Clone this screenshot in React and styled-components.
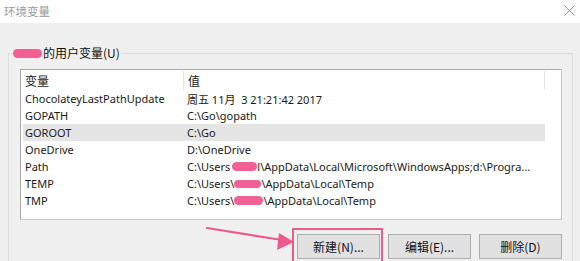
import React from "react";
import styled, { createGlobalStyle } from "styled-components";

const Global = createGlobalStyle`
  html, body { margin: 0; padding: 0; }
  body {
    width: 580px; height: 261px; overflow: hidden;
    font-family: "Noto Sans", "Noto Sans CJK SC", sans-serif;
    font-size: 12px; color: #000;
  }
`;

const Window = styled.div`
  position: relative;
  width: 580px; height: 261px;
  display: flex; flex-direction: column;
  background: #f0f0f0;
  overflow: hidden;
`;

const TitleBar = styled.div`
  height: 23px; flex: none;
  background: #fff;
  display: flex; align-items: center; justify-content: space-between;
  padding: 0 5px 2px 4px;
  box-sizing: border-box;
`;

const Title = styled.span`
  font-family: "Noto Sans CJK SC", sans-serif;
  font-size: 11.5px; color: #9a9a9a;
`;

const Body = styled.div`
  flex: 1;
  padding: 23px 7px 0 8px;
`;

const Group = styled.fieldset`
  margin: 0; height: 100%;
  box-sizing: border-box;
  border: 1px solid #dcdcdc; border-bottom: none;
  padding: 9px 10px 0 11px;
  display: flex; flex-direction: column;
`;

const Legend = styled.legend`
  padding: 0 1px 0 0; margin-left: -7px;
  display: flex; align-items: center;
  font-family: "Noto Sans CJK SC", sans-serif;
  font-size: 12px; color: #111;
  line-height: 14px;
`;

const Blob = styled.span`
  display: inline-block;
  flex: none;
  width: ${p => p.$w}px; height: ${p => p.$h || 8}px;
  background: #f0548c;
  border-radius: 5px;
  margin: 0 ${p => p.$mr || 0}px 0 ${p => p.$ml || 0}px;
  vertical-align: middle;
  opacity: 0.92;
`;

const List = styled.div`
  height: 151px; flex: none;
  background: #fff;
  border: 1px solid #ababab;
  border-right-color: #c7c7c7;
  border-bottom-color: #c7c7c7;
  padding: 0 16px 0 2px;
  box-sizing: border-box;
`;

const Row = styled.div`
  display: grid;
  grid-template-columns: 160px 1fr;
  height: ${p => (p.$header ? 19 : 17)}px;
  align-items: center;
  background: ${p => (p.$sel ? "#e5e5e5" : "transparent")};
  white-space: pre;
  color: #1a1a1a;
`;

const Cell = styled.div`
  padding-left: ${p => (p.$second ? 4 : 2)}px;
  height: 100%;
  display: flex; align-items: center;
  box-sizing: border-box;
  overflow: hidden;
  font-family: ${p => (p.$cjk ? '"Noto Sans CJK SC", sans-serif' : '"Noto Sans", "Noto Sans CJK SC", sans-serif')};
  font-size: ${p => (p.$cjk ? 12 : 11)}px;
  border-left: ${p => (p.$div ? "1px solid #e5e5e5" : "none")};
`;

const HeaderRow = styled(Row)`
  border-right: 1px solid #e5e5e5;
  margin-top: 1px;
`;

const Buttons = styled.div`
  display: flex; justify-content: flex-end; gap: 8px;
  margin-top: 14px;
`;

const Button = styled.button`
  width: 83px; height: 25px;
  background: #e1e1e1;
  border: 1px solid #adadad;
  font-family: "Noto Sans CJK SC", sans-serif;
  font-size: 12px; color: #111;
  padding: 0;
`;

const Highlight = styled.div`
  position: absolute;
  left: 292px; top: 228px; width: 91px; height: 36px;
  border: 2px solid #ec5a8e;
  box-sizing: border-box;
  border-radius: 1px;
  pointer-events: none;
`;

const Arrow = styled.svg`
  position: absolute; left: 0; top: 0;
  pointer-events: none;
`;

const CloseIcon = () => (
  <svg width="11" height="11" viewBox="0 0 11 11">
    <path d="M0.5 0.5 L10.5 10.5 M10.5 0.5 L0.5 10.5" stroke="#8a8a8a" strokeWidth="0.9" fill="none" />
  </svg>
);

const rows = [
  ["ChocolateyLastPathUpdate", <>周五 11月  3 21:21:42 2017</>],
  ["GOPATH", "C:\\Go\\gopath"],
  ["GOROOT", "C:\\Go", true],
  ["OneDrive", "D:\\OneDrive"],
  ["Path", <>C:\Users<Blob $w={25} $h={9} $ml={2} />l\AppData\Local\Microsoft\WindowsApps;d:\Progra...</>],
  ["TEMP", <>C:\Users\<Blob $w={27} $h={8} />\AppData\Local\Temp</>],
  ["TMP", <>C:\Users\<Blob $w={29} $h={9} />\AppData\Local\Temp</>],
];

export default function App() {
  return (
    <>
      <Global />
      <Window>
        <TitleBar>
          <Title>环境变量</Title>
          <CloseIcon />
        </TitleBar>
        <Body>
          <Group>
            <Legend>
              <Blob $w={29} $h={9} $mr={1} />的用户变量(U)
            </Legend>
            <List>
              <HeaderRow $header>
                <Cell $cjk>变量</Cell>
                <Cell $cjk $second $div>值</Cell>
              </HeaderRow>
              {rows.map(([k, v, sel]) => (
                <Row key={k} $sel={sel}>
                  <Cell>{k}</Cell>
                  <Cell $second>{v}</Cell>
                </Row>
              ))}
            </List>
            <Buttons>
              <Button>新建(N)...</Button>
              <Button>编辑(E)...</Button>
              <Button>删除(D)</Button>
            </Buttons>
          </Group>
        </Body>
        <Highlight />
        <Arrow width="580" height="261" viewBox="0 0 580 261">
          <line x1="207" y1="228" x2="282" y2="240" stroke="#ec5a8e" strokeWidth="2.2" strokeLinecap="round" />
          <polygon points="294,242 279,233 277,250" fill="#ec5a8e" />
        </Arrow>
      </Window>
    </>
  );
}
